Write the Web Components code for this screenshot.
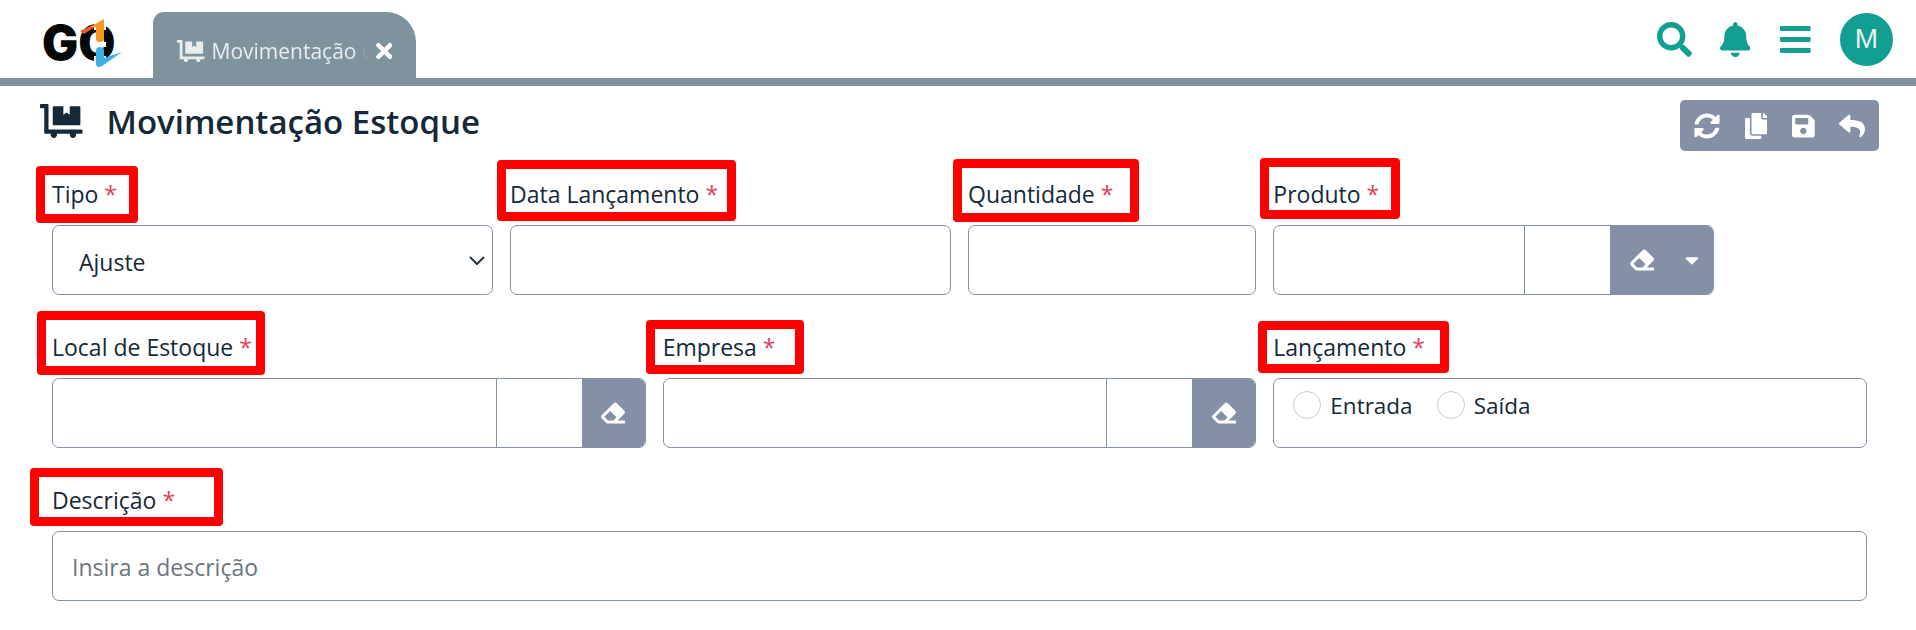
<!DOCTYPE html>
<html lang="pt-BR">
<head>
<meta charset="utf-8">
<title>Movimentação Estoque</title>
<style>
  html, body { margin: 0; padding: 0; background: #fff; }
  body { font-family: "Open Sans", "Noto Sans", sans-serif; color: #152939; width: 1916px; height: 630px; overflow: hidden; }
</style>
</head>
<body>
<app-header></app-header>
<page-title text="Movimentação Estoque"></page-title>
<form-grid>
  <form-field span="3" label="Tipo" mark="-16 -13 102 57"><select-box value="Ajuste"></select-box></form-field>
  <form-field span="3" label="Data Lançamento" mark="-13 -19 239 61"><text-box></text-box></form-field>
  <form-field span="2" label="Quantidade" mark="-15 -20 186 63"><text-box></text-box></form-field>
  <form-field span="3" label="Produto" mark="-13 -21 140 61"><lookup-box caret></lookup-box></form-field>
  <form-field span="4" label="Local de Estoque" mark="-15 -21 228 64"><lookup-box></lookup-box></form-field>
  <form-field span="4" label="Empresa" mark="-17 -12 158 54"><lookup-box></lookup-box></form-field>
  <form-field span="4" label="Lançamento" mark="-15 -11 191 52"><radio-box></radio-box></form-field>
  <form-field span="12" label="Descrição" mark="-22 -17 193 58"><text-box placeholder="Insira a descrição"></text-box></form-field>
</form-grid>

<script>
// Font Awesome 5 solid shapes, drawn inline
const ICONS = {
  search: [512, "M505 442.7L405.3 343c-4.5-4.5-10.6-7-17-7H372c27.6-35.3 44-79.7 44-128C416 93.1 322.9 0 208 0S0 93.1 0 208s93.1 208 208 208c48.3 0 92.7-16.4 128-44v16.3c0 6.4 2.5 12.5 7 17l99.7 99.7c9.4 9.4 24.6 9.4 33.9 0l28.3-28.3c9.4-9.4 9.4-24.6.1-34zM208 336c-70.7 0-128-57.2-128-128 0-70.7 57.2-128 128-128 70.7 0 128 57.2 128 128 0 70.7-57.2 128-128 128z"],
  bell: [448, "M224 512c35.32 0 63.97-28.65 63.97-64H160.03c0 35.35 28.65 64 63.97 64zm215.39-149.71c-19.32-20.76-55.47-51.99-55.47-154.29 0-77.7-54.48-139.9-127.94-155.16V32c0-17.67-14.32-32-31.98-32s-31.98 14.33-31.98 32v20.84C118.56 68.1 64.08 130.3 64.08 208c0 102.3-36.15 133.53-55.47 154.29-6 6.45-8.66 14.16-8.61 21.71.11 16.4 12.98 32 32.1 32h383.8c19.12 0 32-15.6 32.1-32 .05-7.55-2.61-15.27-8.61-21.71z"],
  bars: [448, "M16 132h416c8.837 0 16-7.163 16-16V76c0-8.837-7.163-16-16-16H16C7.163 60 0 67.163 0 76v40c0 8.837 7.163 16 16 16zm0 160h416c8.837 0 16-7.163 16-16v-40c0-8.837-7.163-16-16-16H16c-8.837 0-16 7.163-16 16v40c0 8.837 7.163 16 16 16zm0 160h416c8.837 0 16-7.163 16-16v-40c0-8.837-7.163-16-16-16H16c-8.837 0-16 7.163-16 16v40c0 8.837 7.163 16 16 16z"],
  sync: [512, "M370.72 133.28C339.458 104.008 298.888 87.962 255.848 88c-77.458.068-144.328 53.178-162.791 126.85-1.344 5.363-6.122 9.15-11.651 9.15H24.103c-7.498 0-13.194-6.807-11.807-14.176C33.933 94.924 134.813 8 256 8c66.448 0 126.791 26.136 171.315 68.685L463.03 40.97C478.149 25.851 504 36.559 504 57.941V192c0 13.255-10.745 24-24 24H345.941c-21.382 0-32.09-25.851-16.971-40.971l41.75-41.749zM32 296h134.059c21.382 0 32.09 25.851 16.971 40.971l-41.75 41.75c31.262 29.273 71.835 45.319 114.876 45.28 77.418-.07 144.315-53.144 162.787-126.849 1.344-5.363 6.122-9.15 11.651-9.15h57.304c7.498 0 13.194 6.807 11.807 14.176C478.067 417.076 377.187 504 256 504c-66.448 0-126.791-26.136-171.315-68.685L48.97 471.03C33.851 486.149 8 475.441 8 454.059V320c0-13.255 10.745-24 24-24z"],
  copy: [448, "M320 448v40c0 13.255-10.745 24-24 24H24c-13.255 0-24-10.745-24-24V120c0-13.255 10.745-24 24-24h72v296c0 30.879 25.121 56 56 56h168zm0-344V0H152c-13.255 0-24 10.745-24 24v368c0 13.255 10.745 24 24 24h272c13.255 0 24-10.745 24-24V128H344c-13.2 0-24-10.8-24-24zm120.971-31.029L375.029 7.029A24 24 0 0 0 358.059 0H352v96h96v-6.059a24 24 0 0 0-7.029-16.97z"],
  save: [448, "M433.941 129.941l-83.882-83.882A48 48 0 0 0 316.118 32H48C21.49 32 0 53.49 0 80v352c0 26.51 21.49 48 48 48h352c26.51 0 48-21.49 48-48V163.882a48 48 0 0 0-14.059-33.941zM224 416c-35.346 0-64-28.654-64-64 0-35.346 28.654-64 64-64s64 28.654 64 64c0 35.346-28.654 64-64 64zm96-304.52V212c0 6.627-5.373 12-12 12H76c-6.627 0-12-5.373-12-12V108c0-6.627 5.373-12 12-12h228.52c3.183 0 6.235 1.264 8.485 3.515l3.48 3.48A11.996 11.996 0 0 1 320 111.48z"],
  reply: [512, "M8.309 189.836L184.313 37.851C199.719 24.546 224 35.347 224 56.015v80.053c160.629 1.839 288 34.032 288 186.258 0 61.441-39.581 122.309-83.333 154.132-13.653 9.931-33.111-2.533-28.077-18.631 45.344-145.012-21.507-183.51-176.59-185.742V360c0 20.7-24.3 31.453-39.687 18.164l-176.004-152c-11.071-9.562-11.086-26.753 0-36.328z"],
  eraser: [512, "M497.941 273.941c18.745-18.745 18.745-49.137 0-67.882l-160-160c-18.745-18.745-49.136-18.746-67.883 0l-256 256c-18.745 18.745-18.745 49.137 0 67.882l96 96A48.004 48.004 0 0 0 144 480h356c6.627 0 12-5.373 12-12v-40c0-6.627-5.373-12-12-12H355.883l142.058-142.059zm-302.627-62.627l137.373 137.373L265.373 416H150.628l-80-80 124.686-124.686z"],
  caret: [320, "M31.3 192h257.3c17.8 0 26.7 21.5 14.1 34.1L174.1 354.8c-7.8 7.8-20.5 7.8-28.3 0L17.2 226.1C4.6 213.5 13.5 192 31.3 192z"],
  dolly: [640, "M208 320h384c8.8 0 16-7.2 16-16V48c0-8.8-7.2-16-16-16H448v128l-48-32-48 32V32H208c-8.8 0-16 7.2-16 16v256c0 8.8 7.2 16 16 16zm416 64H128V16c0-8.8-7.2-16-16-16H16C7.2 0 0 7.2 0 16v32c0 8.8 7.2 16 16 16h48v368c0 8.8 7.2 16 16 16h82.9c-1.8 5-2.9 10.4-2.9 16 0 26.5 21.5 48 48 48s48-21.5 48-48c0-5.6-1.2-11-2.9-16H451c-1.8 5-2.9 10.4-2.9 16 0 26.5 21.5 48 48 48s48-21.5 48-48c0-5.6-1.2-11-2.9-16H624c8.8 0 16-7.2 16-16v-32c0-8.8-7.2-16-16-16z"],
  times: [352, "M242.72 256l100.07-100.07c12.28-12.28 12.28-32.19 0-44.48l-22.24-22.24c-12.28-12.28-32.19-12.28-44.48 0L176 189.28 75.93 89.21c-12.28-12.28-32.19-12.28-44.48 0L9.21 111.45c-12.28 12.28-12.28 32.19 0 44.48L109.28 256 9.21 356.07c-12.28 12.28-12.28 32.19 0 44.48l22.24 22.24c12.28 12.28 32.2 12.28 44.48 0L176 322.72l100.07 100.07c12.28 12.28 32.2 12.28 44.48 0l22.24-22.24c12.28-12.28 12.28-32.19 0-44.48L242.72 256z"]
};

class FaIcon extends HTMLElement {
  connectedCallback() {
    const [w, d] = ICONS[this.getAttribute('name')];
    const size = this.getAttribute('size') || 24;
    const root = this.shadowRoot || this.attachShadow({ mode: 'open' });
    root.innerHTML = `
      <style>:host { display: inline-flex; line-height: 0; } svg { fill: currentColor; display: block; }</style>
      <svg width="${size * w / 512}" height="${size}" viewBox="0 0 ${w} 512"><path d="${d}"/></svg>`;
  }
}

class AppLogo extends HTMLElement {
  constructor() {
    super();
    this.attachShadow({ mode: 'open' }).innerHTML = `
      <style>
        :host { display: block; position: relative; width: 80px; height: 50px; }
        span { position: absolute; left: 0; top: 0; font: 900 48px/50px Inter, Roboto, sans-serif; color: #060808; }
        svg { position: absolute; left: 0; top: 0; }
      </style>
      <span>GO</span>
      <svg width="82" height="50" viewBox="0 0 82 50">
        <rect x="52" y="0" width="12" height="12" fill="#fff"/>
        <rect x="52" y="38" width="12" height="12" fill="#fff"/>
        <path d="M38 13 L53 6 L53 9 L42 16 Z" fill="#ee5a2a"/>
        <path d="M48 9 L62 1 L62 20 Q62 24 58 24 Q54 24 54 20 L54 9 Z" fill="#f7981d"/>
        <rect x="52" y="24" width="12" height="5" fill="#fff"/>
        <path d="M54 33 Q54 29 58 29 Q62 29 62 33 L62 40 L80 34 L60 48 Q54 51 54 45 Z" fill="#3eaee6"/>
      </svg>`;
  }
}

class NavTab extends HTMLElement {
  constructor() {
    super();
    this.attachShadow({ mode: 'open' }).innerHTML = `
      <style>
        :host { display: flex; align-items: center; box-sizing: border-box; width: 263px; height: 66px; margin-left: 31px;
                padding: 12px 24px 0; background: #7f939e; color: #e9eded; border-radius: 11px 30px 0 0; align-self: flex-end; }
        .txt { font-size: 21px; line-height: 28px; margin-left: 7px; width: 160px; overflow: hidden; white-space: nowrap;
               -webkit-mask-image: linear-gradient(to right, #000 148px, rgba(0,0,0,.1) 152px, rgba(0,0,0,.1) 158px, transparent 160px); }
        .x { color: #fff; margin-left: 4px; }
      </style>
      <fa-icon name="dolly" size="22"></fa-icon>
      <span class="txt"><slot></slot></span>
      <fa-icon class="x" name="times" size="24"></fa-icon>`;
  }
}

class AppHeader extends HTMLElement {
  constructor() {
    super();
    this.attachShadow({ mode: 'open' }).innerHTML = `
      <style>
        :host { display: flex; box-sizing: border-box; height: 86px; border-bottom: 8px solid #7f939e; padding-left: 42px; align-items: flex-start; }
        app-logo { margin-top: 18px; }
        .right { margin-left: auto; display: flex; align-items: center; color: #129e90; height: 78px; padding-right: 23px; }
        .avatar { width: 53px; height: 53px; border-radius: 50%; background: #129e90; color: #e6f2f0; display: flex; align-items: center; justify-content: center;
                  font: 400 28px "Liberation Sans", sans-serif; margin-left: 29px; }
        fa-icon.bell { margin-left: 28px; }
        fa-icon.bars { margin-left: 30px; }
      </style>
      <app-logo></app-logo>
      <nav-tab>Movimentação de Estoque</nav-tab>
      <div class="right">
        <fa-icon name="search" size="35"></fa-icon>
        <fa-icon class="bell" name="bell" size="35"></fa-icon>
        <fa-icon class="bars" name="bars" size="35"></fa-icon>
        <div class="avatar">M</div>
      </div>`;
  }
}

class PageTitle extends HTMLElement {
  constructor() {
    super();
    this.attachShadow({ mode: 'open' }).innerHTML = `
      <style>
        :host { display: flex; align-items: flex-start; padding: 14px 37px 0 40px; height: 51px; box-sizing: content-box; }
        fa-icon.main { color: #152939; margin-top: 4px; }
        h1 { margin: 0 0 0 24px; font: 600 33px/44px "Open Sans", sans-serif; color: #152939; }
        .tools { margin-left: auto; display: flex; align-items: center; gap: 24.5px; padding-left: 14px; box-sizing: border-box; height: 51px; width: 199px; background: #8490a6; color: #fff; border-radius: 5px; }
      </style>
      <fa-icon class="main" name="dolly" size="34"></fa-icon>
      <h1>${this.getAttribute('text')}</h1>
      <div class="tools">
        <fa-icon name="sync" size="26"></fa-icon>
        <fa-icon name="copy" size="26"></fa-icon>
        <fa-icon name="save" size="26"></fa-icon>
        <fa-icon name="reply" size="26"></fa-icon>
      </div>`;
  }
}

class FormGrid extends HTMLElement {
  constructor() {
    super();
    this.attachShadow({ mode: 'open' }).innerHTML = `
      <style>
        :host { display: grid; grid-template-columns: repeat(12, 1fr); column-gap: 17px; row-gap: 37px; padding: 28px 49px 0 52px; }
      </style>
      <slot></slot>`;
  }
}

class RedMark extends HTMLElement {
  constructor() {
    super();
    this.attachShadow({ mode: 'open' }).innerHTML = `
      <style>
        :host { position: absolute; box-sizing: border-box; border: 9px solid #f00; border-radius: 4px; pointer-events: none; }
      </style>`;
  }
}

class FormField extends HTMLElement {
  constructor() {
    super();
    const [x, y, w, h] = this.getAttribute('mark').split(' ');
    this.attachShadow({ mode: 'open' }).innerHTML = `
      <style>
        :host { display: block; position: relative; grid-column: span ${this.getAttribute('span')}; min-width: 0; }
        label { display: block; height: 46px; font-size: 23px; line-height: 30px; color: #152939; white-space: nowrap; }
        b { font-weight: 400; color: #e0405f; }
        red-mark { left: ${x}px; top: ${y}px; width: ${w}px; height: ${h}px; }
      </style>
      <label>${this.getAttribute('label')} <b>*</b></label>
      <slot></slot>
      <red-mark></red-mark>`;
  }
}

const BOX = `
  box-sizing: border-box; height: 70px; border: 1px solid #8490a6; border-radius: 7px; background: #fff;
  font: 400 23px "Open Sans", sans-serif; color: #152939;`;

class TextBox extends HTMLElement {
  constructor() {
    super();
    this.attachShadow({ mode: 'open' }).innerHTML = `
      <style>
        :host { display: block; }
        input { display: block; width: 100%; padding: 2px 19px 0; outline: 0; ${BOX} }
        input::placeholder { color: #6c757d; opacity: 1; }
      </style>
      <input type="text" placeholder="${this.getAttribute('placeholder') || ''}">`;
  }
}

class SelectBox extends HTMLElement {
  constructor() {
    super();
    this.attachShadow({ mode: 'open' }).innerHTML = `
      <style>
        :host { display: block; position: relative; }
        select { display: block; width: 100%; padding: 3px 0 0 26px; appearance: none; -webkit-appearance: none; outline: 0; ${BOX} }
        svg { position: absolute; right: 8px; top: 31px; pointer-events: none; }
      </style>
      <select><option>${this.getAttribute('value')}</option></select>
      <svg width="16" height="10" viewBox="0 0 16 10"><path d="M1.5 1.5 L8 8 L14.5 1.5" fill="none" stroke="#25323f" stroke-width="2" stroke-linecap="round" stroke-linejoin="round"/></svg>`;
  }
}

class LookupBox extends HTMLElement {
  constructor() {
    super();
    const caret = this.hasAttribute('caret');
    this.attachShadow({ mode: 'open' }).innerHTML = `
      <style>
        :host { display: flex; ${BOX} overflow: hidden; }
        .a { flex: 1; min-width: 0; border-right: 1px solid #8490a6; }
        .b { width: 85px; }
        .btn { background: #8490a6; color: #fff; display: flex; align-items: center; justify-content: center; width: 63px; }
        .btn.wide { width: 103px; justify-content: flex-start; padding-left: 20px; box-sizing: border-box; }
        .btn.wide fa-icon.er { margin-right: 31px; }
      </style>
      <div class="a"></div>
      <div class="b"></div>
      <div class="btn ${caret ? 'wide' : ''}">
        <fa-icon class="er" name="eraser" size="24"></fa-icon>
        ${caret ? '<fa-icon name="caret" size="22"></fa-icon>' : ''}
      </div>`;
  }
}

class RadioBox extends HTMLElement {
  constructor() {
    super();
    this.attachShadow({ mode: 'open' }).innerHTML = `
      <style>
        :host { display: block; padding: 12px 19px; ${BOX} font-size: 22.5px; }
        .row { display: flex; align-items: center; height: 28px; }
        input { appearance: none; -webkit-appearance: none; box-sizing: border-box; width: 28px; height: 28px; margin: 0 9px 0 0; border: 1px solid #c8ccd0; border-radius: 50%; background: #fff; }
        label { display: flex; align-items: center; margin-right: 24px; line-height: 28px; }
        span { padding-top: 2px; }
      </style>
      <div class="row">
        <label><input type="radio" name="lanc"><span>Entrada</span></label>
        <label><input type="radio" name="lanc"><span>Saída</span></label>
      </div>`;
  }
}

customElements.define('fa-icon', FaIcon);
customElements.define('app-logo', AppLogo);
customElements.define('nav-tab', NavTab);
customElements.define('app-header', AppHeader);
customElements.define('page-title', PageTitle);
customElements.define('form-grid', FormGrid);
customElements.define('red-mark', RedMark);
customElements.define('form-field', FormField);
customElements.define('text-box', TextBox);
customElements.define('select-box', SelectBox);
customElements.define('lookup-box', LookupBox);
customElements.define('radio-box', RadioBox);
</script>
</body>
</html>
